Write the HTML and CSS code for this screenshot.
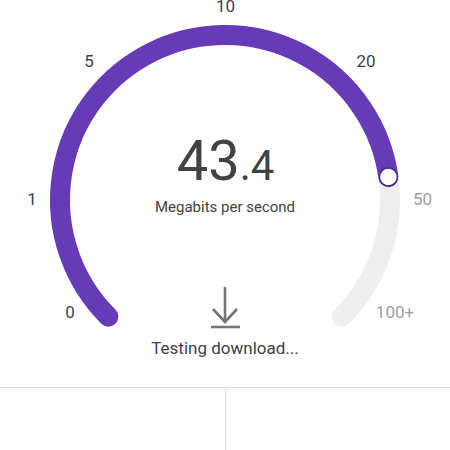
FILE: index.html
```html
<!DOCTYPE html>
<html>
<head>
<meta charset="utf-8">
<link rel="stylesheet" href="styles.css">
</head>
<body>
<div class="page">
  <div class="gauge">
    <svg class="dial" width="450" height="387" viewBox="0 0 450 387">
      <path class="track" d="M388.4 177 A165 165 0 0 1 341.67 316.67"/>
      <path class="fill" d="M108.33 316.67 A165 165 0 1 1 388.4 177"/>
      <circle class="knob" cx="388.4" cy="177" r="9"/>
      <text class="tick" x="225.5" y="12">10</text>
      <text class="tick" x="89" y="67">5</text>
      <text class="tick" x="366" y="67">20</text>
      <text class="tick" x="32" y="205">1</text>
      <text class="tick muted" x="422.5" y="205">50</text>
      <text class="tick" x="70" y="318">0</text>
      <text class="tick muted" x="395" y="318">100+</text>
    </svg>
    <div class="value">43<span class="decimal">.4</span></div>
    <div class="unit">Megabits per second</div>
    <svg class="download" width="32" height="44" viewBox="0 0 32 44">
      <line x1="16" y1="1" x2="16" y2="36"/>
      <polyline points="4,23 16,36 28,23"/>
      <line x1="2" y1="41" x2="31" y2="41"/>
    </svg>
    <div class="status">Testing download...</div>
  </div>
  <div class="stats">
    <div class="stat"></div>
    <div class="stat second"></div>
  </div>
</div>
</body>
</html>
```
FILE: styles.css
```css
html, body {
  margin: 0;
  padding: 0;
  background: #ffffff;
}
body {
  font-family: Roboto, "Liberation Sans", sans-serif;
  color: #424242;
}
.page {
  width: 450px;
  height: 450px;
  overflow: hidden;
}
.gauge {
  position: relative;
  height: 387px;
  display: flex;
  flex-direction: column;
  align-items: center;
  padding-top: 133px;
  box-sizing: border-box;
}
.dial {
  position: absolute;
  left: 0;
  top: 0;
}
.track {
  fill: none;
  stroke: #eeeeee;
  stroke-width: 20;
  stroke-linecap: round;
}
.fill {
  fill: none;
  stroke: #673ab7;
  stroke-width: 20;
  stroke-linecap: round;
}
.knob {
  fill: #ffffff;
  stroke: #4a2a9a;
  stroke-width: 1.5;
}
.tick {
  font-family: Roboto, "Liberation Sans", sans-serif;
  font-size: 17px;
  fill: #424242;
  text-anchor: middle;
}
.tick.muted {
  fill: #9e9e9e;
}
.value {
  position: relative;
  font-size: 56px;
  line-height: 56px;
  height: 56px;
  color: #424242;
  margin-left: 1px;
}
.decimal {
  font-size: 42px;
  line-height: 42px;
}
.unit {
  position: relative;
  margin-top: 9px;
  font-size: 15px;
  line-height: 18px;
  color: #424242;
}
.download {
  position: relative;
  margin-top: 70px;
  fill: none;
  stroke: #757575;
  stroke-width: 2.6;
}
.status {
  position: relative;
  margin-top: 8px;
  font-size: 17px;
  line-height: 20px;
  color: #424242;
}
.stats {
  display: grid;
  grid-template-columns: 225px 225px;
  border-top: 1.5px solid #dddddd;
  height: 63px;
}
.stat.second {
  border-left: 1.5px solid #dddddd;
}
```
